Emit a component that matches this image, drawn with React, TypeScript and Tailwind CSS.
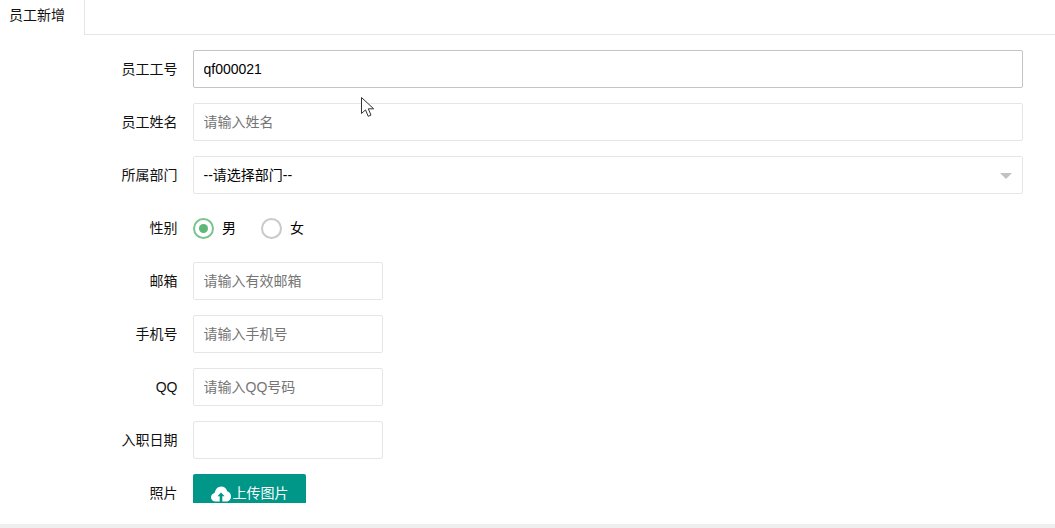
const fieldClass =
  "h-[38px] rounded-[2px] border bg-white pl-[9.500px] text-[14px] text-black outline-none placeholder:text-[#757575]";

function Row({ label, children }: { label: string; children: React.ReactNode }) {
  return (
    <div className="mb-[15px] flex h-[38px] items-center">
      <label className="w-[177.500px] shrink-0 text-right text-[14px] text-[#111]">{label}</label>
      <div className="ml-[15.500px] flex min-w-0 flex-1 items-center">{children}</div>
    </div>
  );
}

function Radio({ label, checked }: { label: string; checked?: boolean }) {
  return (
    <div className="mr-[25px] flex items-center">
      <span
        className={
          "flex h-[21px] w-[21px] items-center justify-center rounded-full border-2 " +
          (checked ? "border-[#7cc48f]" : "border-[#c9c9c9]")
        }
      >
        {checked && <span className="h-[9px] w-[9px] rounded-full bg-[#5fb878]" />}
      </span>
      <span className="ml-[8px] text-[14px] text-black">{label}</span>
    </div>
  );
}

function CloudIcon() {
  return (
    <svg width="20" height="17" viewBox="0 0 20 17" aria-hidden="true">
      <path
        fill="#fff"
        d="M4.600 16.500C2 16.500 0 14.600 0 12.200c0-2.200 1.600-4 3.700-4.300C4.300 4.300 6.900 1.500 10.200 1.500c2.900 0 5.300 2 6 4.800 2.200.4 3.800 2.700 3.800 5.200 0 2.800-2 5-4.600 5z"
      />
      <path fill="#009688" d="M10 7.500l3.600 3.800h-2.300V17H8.700v-5.700H6.400z" />
    </svg>
  );
}

export default function App() {
  return (
    <div className="flex h-[528px] w-[1055px] flex-col overflow-hidden bg-white font-['Liberation_Sans','Noto_Sans_CJK_SC',sans-serif]">
      {/* Tabs */}
      <div className="flex h-[35px] shrink-0">
        <div className="flex w-[85px] items-center border-r border-[#e6e6e6] pb-[4px] pl-[9px] text-[14px] text-[#111]">
          员工新增
        </div>
        <div className="flex-1 border-b border-[#e6e6e6]" />
      </div>

      {/* Form */}
      <div className="relative h-[468px] shrink-0 overflow-hidden pt-[15px] pr-[32px]">
        <Row label="员工工号">
          <input className={fieldClass + " w-full border-[#c4c4c4]"} value="qf000021" readOnly />
        </Row>
        <Row label="员工姓名">
          <input className={fieldClass + " w-full border-[#e6e6e6]"} placeholder="请输入姓名" />
        </Row>
        <Row label="所属部门">
          <div className={fieldClass + " relative flex w-full items-center border-[#e6e6e6]"}>
            --请选择部门--
            <span className="absolute right-[10px] top-[16px] border-x-[6px] border-t-[6px] border-x-transparent border-t-[#c2c2c2]" />
          </div>
        </Row>
        <Row label="性别">
          <Radio label="男" checked />
          <Radio label="女" />
        </Row>
        <Row label="邮箱">
          <input className={fieldClass + " w-[190px] border-[#e6e6e6]"} placeholder="请输入有效邮箱" />
        </Row>
        <Row label="手机号">
          <input className={fieldClass + " w-[190px] border-[#e6e6e6]"} placeholder="请输入手机号" />
        </Row>
        <Row label="QQ">
          <input className={fieldClass + " w-[190px] border-[#e6e6e6]"} placeholder="请输入QQ号码" />
        </Row>
        <Row label="入职日期">
          <input className={fieldClass + " w-[190px] border-[#e6e6e6]"} />
        </Row>
        <Row label="照片">
          <button className="flex h-[38px] w-[113px] items-center justify-center gap-[2px] rounded-[2px] bg-[#009688] text-[14px] text-white">
            <CloudIcon />
            上传图片
          </button>
        </Row>

        {/* Mouse pointer caught in the capture */}
        <svg className="absolute left-[361px] top-[62px]" width="14" height="22" viewBox="0 0 14 22" aria-hidden="true">
          <path
            fill="#fff"
            stroke="#333"
            strokeWidth="1"
            d="M.5.5v16l4-3.600 2.700 6.400 2.800-1.200-2.700-6.300h5.400z"
          />
        </svg>
      </div>

      <div className="flex-1" />
      <div className="h-[4px] shrink-0 bg-[#eeeeee]" />
    </div>
  );
}
